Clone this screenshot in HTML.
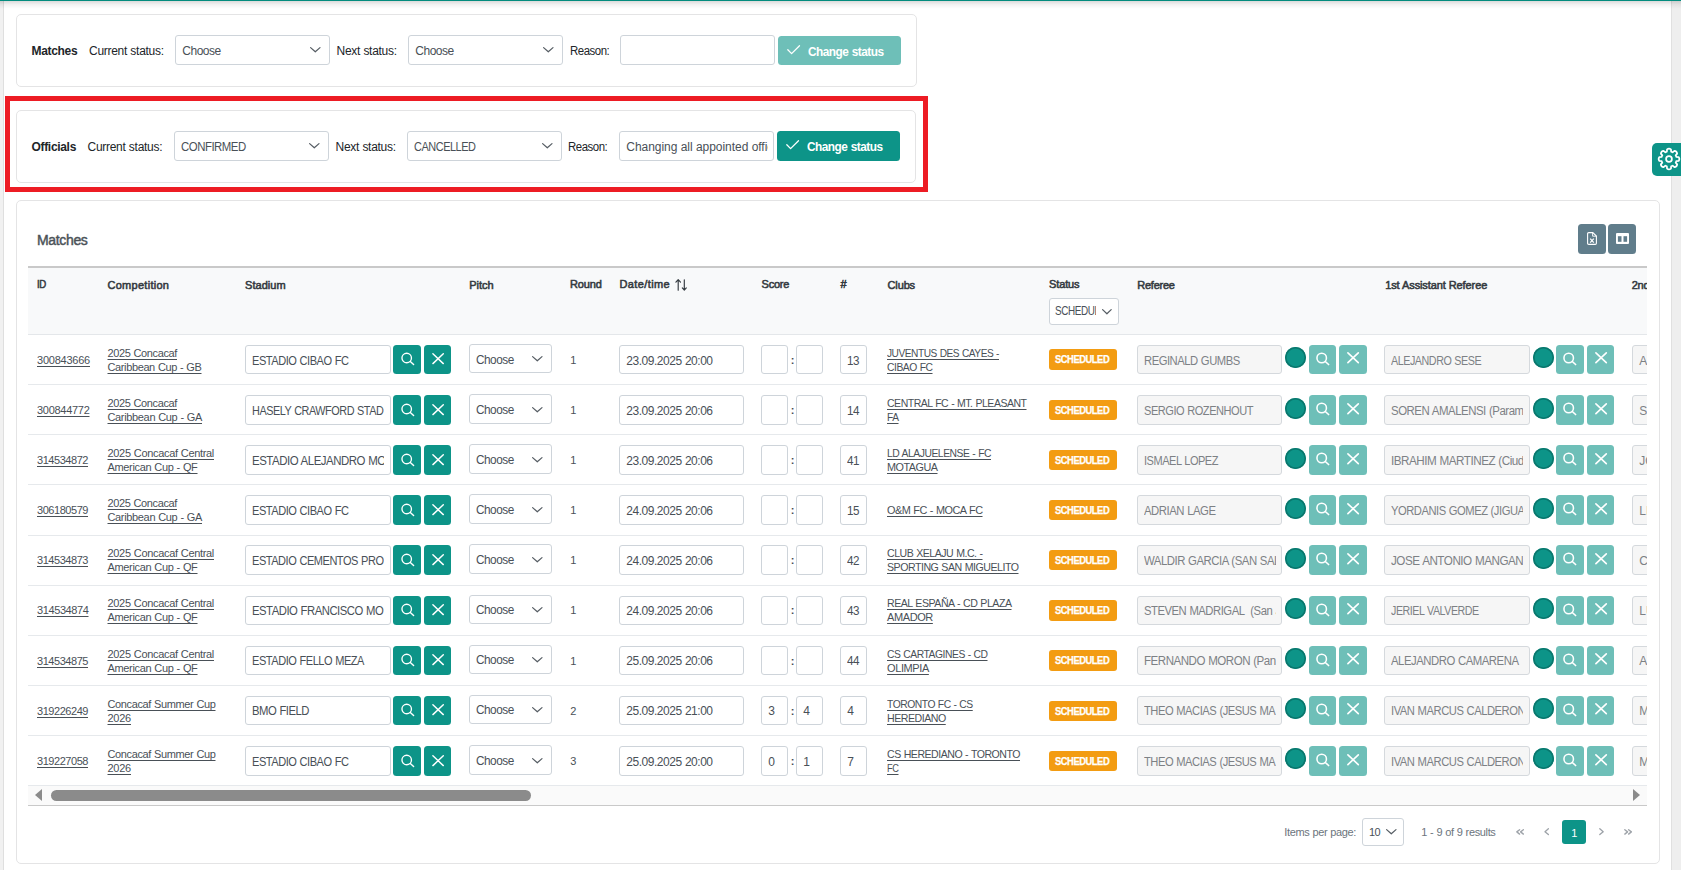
<!DOCTYPE html>
<html lang="en"><head><meta charset="utf-8"><title>Matches</title>
<style>
html,body{margin:0;padding:0;overflow:hidden}
body{width:1681px;height:870px;overflow:hidden;background:#fff;position:relative;font-family:"Liberation Sans",sans-serif;color:#495057;font-size:11px}
div,span,svg,a,b,label,h2{position:absolute;box-sizing:border-box;margin:0}
.t{white-space:pre;transform-origin:0 50%}
.a{text-decoration:underline;text-decoration-thickness:1px;text-underline-offset:1.5px}
.i{overflow:visible}
.topbar{left:0;top:0;width:1681px;height:1.25px;background:#038c7e}
.topshadow{left:0;top:1px;width:1681px;height:8px;background:linear-gradient(rgba(0,0,0,.14),rgba(0,0,0,.05) 45%,rgba(0,0,0,0))}
.lstrip{left:0;top:1px;width:3.6px;height:869px;background:#f1f1f1;border-right:1px solid #dfdfdf}
.rstrip{left:1671px;top:1px;width:10px;height:869px;background:#eee;border-left:1px solid #e0e0e0}
.gear{background:#0d9488;border-radius:5px 0 0 5px}
.panel{border:1px solid #e4e4e5;border-radius:5px;background:#fff}
.sel,.inp{border:1px solid #ced4da;border-radius:3px;background:#fff}
.inp.dis{background:#f6f6f6;border-color:#d5d9dd}
.clip{overflow:hidden}
.btn{background:#0d9488;border-radius:3.5px}
.red{border:5px solid #ed1c24}
.tool{background:#607d8b;border-radius:3.5px}
.tbl{overflow:hidden}
.tb-top{background:#c9c9c9}
.thead{background:#f8f9fa;border-bottom:1px solid #e4e7ea}
.tr{border-bottom:1px solid #e6e9ec;box-sizing:content-box}
.badge{background:#f39c12;border-radius:3px}
.dot{background:#0d9488;box-shadow:inset 0 0 0 1.6px #0a776d;border-radius:50%}
.hscroll{background:#fafafa;border-bottom:1px solid #c9c9c9}
.thumb{left:22.5px;top:4px;width:480.5px;height:11px;border-radius:5.5px;background:#8b8b8b}
.arrl{left:7px;top:3px;width:0;height:0;border-top:6.5px solid transparent;border-bottom:6.5px solid transparent;border-right:7px solid #8b8b8b}
.arrr{left:1605px;top:3px;width:0;height:0;border-top:6.5px solid transparent;border-bottom:6.5px solid transparent;border-left:7px solid #8b8b8b}
.page{background:#0d9488;border-radius:3px}
</style></head>
<body>
<div class="lstrip"></div><div class="rstrip"></div><div class="topshadow"></div><div class="topbar"></div>
<div class="gear" style="left:1652px;top:143px;width:29px;height:33px;">
<svg class="i" style="left:4.6px;top:4px" width="24" height="24" viewBox="0 0 24 24"><path d="M9.83 4.72L10.05 2.40A3.2 3.2 0 0 1 13.95 2.40L14.17 4.72A7.6 7.6 0 0 1 15.61 5.31L15.61 5.31L17.41 3.83A3.2 3.2 0 0 1 20.17 6.59L18.69 8.39A7.6 7.6 0 0 1 19.28 9.83L19.28 9.83L21.60 10.05A3.2 3.2 0 0 1 21.60 13.95L19.28 14.17A7.6 7.6 0 0 1 18.69 15.61L18.69 15.61L20.17 17.41A3.2 3.2 0 0 1 17.41 20.17L15.61 18.69A7.6 7.6 0 0 1 14.17 19.28L14.17 19.28L13.95 21.60A3.2 3.2 0 0 1 10.05 21.60L9.83 19.28A7.6 7.6 0 0 1 8.39 18.69L8.39 18.69L6.59 20.17A3.2 3.2 0 0 1 3.83 17.41L5.31 15.61A7.6 7.6 0 0 1 4.72 14.17L4.72 14.17L2.40 13.95A3.2 3.2 0 0 1 2.40 10.05L4.72 9.83A7.6 7.6 0 0 1 5.31 8.39L5.31 8.39L3.83 6.59A3.2 3.2 0 0 1 6.59 3.83L8.39 5.31A7.6 7.6 0 0 1 9.83 4.72Z" fill="none" stroke="#fff" stroke-width="1.75" stroke-linejoin="round"/><circle cx="12" cy="12" r="2.9" fill="none" stroke="#fff" stroke-width="1.75"/></svg>
</div>
<div class="panel" style="left:16px;top:14px;width:901px;height:73px;">
<span class="t" style="left:14.5px;top:28.5px;font-size:12px;line-height:15px;font-weight:700;color:#212529;letter-spacing:-0.326px;">Matches</span>
<span class="t" style="left:72px;top:28.5px;font-size:12px;line-height:15px;color:#212529;letter-spacing:-0.282px;word-spacing:0.282px;">Current status:</span>
<div class="sel" style="left:158px;top:20px;width:155px;height:30px;">
<span class="t" style="left:6.3px;top:7.5px;font-size:12px;line-height:15px;letter-spacing:-0.479px;">Choose</span>
<svg class="i" style="left:134.2px;top:10.85px" width="10.6" height="5.6" viewBox="0 0 10.6 5.6"><path d="M0.6 0.6L5.3 4.8L10 0.6" stroke="#555c63" stroke-width="1.2" stroke-linecap="round" stroke-linejoin="round" fill="none"/></svg>
</div>
<span class="t" style="left:319.5px;top:28.5px;font-size:12px;line-height:15px;color:#212529;letter-spacing:-0.283px;word-spacing:0.283px;">Next status:</span>
<div class="sel" style="left:391px;top:20px;width:155px;height:30px;">
<span class="t" style="left:6.3px;top:7.5px;font-size:12px;line-height:15px;letter-spacing:-0.479px;">Choose</span>
<svg class="i" style="left:134.2px;top:10.85px" width="10.6" height="5.6" viewBox="0 0 10.6 5.6"><path d="M0.6 0.6L5.3 4.8L10 0.6" stroke="#555c63" stroke-width="1.2" stroke-linecap="round" stroke-linejoin="round" fill="none"/></svg>
</div>
<span class="t" style="left:552.5px;top:28.5px;font-size:12px;line-height:15px;color:#212529;letter-spacing:-0.500px;transform:scaleX(0.9526);">Reason:</span>
<div class="inp" style="left:603px;top:20px;width:155px;height:30px;">
</div>
<div class="btn" style="left:761px;top:21px;width:123px;height:29px;background:#6ebfb8;">
<svg class="i" style="left:9.4px;top:9.4px" width="13.4" height="9.6" viewBox="0 0 13.4 9.6"><path d="M0.8 4.8L4.6 8.6L12.5 0.8" stroke="#fff" stroke-width="1.3" stroke-linecap="round" stroke-linejoin="round" fill="none"/></svg>
<span class="t" style="left:29.5px;top:8.5px;font-size:12px;line-height:15px;font-weight:700;color:#fff;letter-spacing:-0.500px;word-spacing:0.500px;transform:scaleX(0.9845);">Change status</span>
</div>
</div>
<div class="panel" style="left:16px;top:110px;width:900px;height:73px;">
<span class="t" style="left:14.5px;top:28.5px;font-size:12px;line-height:15px;font-weight:700;color:#212529;letter-spacing:-0.318px;">Officials</span>
<span class="t" style="left:70.5px;top:28.5px;font-size:12px;line-height:15px;color:#212529;letter-spacing:-0.282px;word-spacing:0.282px;">Current status:</span>
<div class="sel" style="left:157px;top:20px;width:155px;height:30px;">
<span class="t" style="left:6.3px;top:7.5px;font-size:12px;line-height:15px;letter-spacing:-0.500px;transform:scaleX(0.9498);">CONFIRMED</span>
<svg class="i" style="left:134.2px;top:10.85px" width="10.6" height="5.6" viewBox="0 0 10.6 5.6"><path d="M0.6 0.6L5.3 4.8L10 0.6" stroke="#555c63" stroke-width="1.2" stroke-linecap="round" stroke-linejoin="round" fill="none"/></svg>
</div>
<span class="t" style="left:318.5px;top:28.5px;font-size:12px;line-height:15px;color:#212529;letter-spacing:-0.283px;word-spacing:0.283px;">Next status:</span>
<div class="sel" style="left:390px;top:20px;width:155px;height:30px;">
<span class="t" style="left:6.3px;top:7.5px;font-size:12px;line-height:15px;letter-spacing:-0.500px;transform:scaleX(0.9107);">CANCELLED</span>
<svg class="i" style="left:134.2px;top:10.85px" width="10.6" height="5.6" viewBox="0 0 10.6 5.6"><path d="M0.6 0.6L5.3 4.8L10 0.6" stroke="#555c63" stroke-width="1.2" stroke-linecap="round" stroke-linejoin="round" fill="none"/></svg>
</div>
<span class="t" style="left:551px;top:28.5px;font-size:12px;line-height:15px;color:#212529;letter-spacing:-0.500px;transform:scaleX(0.9526);">Reason:</span>
<div class="inp" style="left:602px;top:20px;width:155px;height:30px;">
<div class="clip" style="left:0px;top:0px;width:147.7px;height:28px;">
<span class="t" style="left:6.3px;top:7.5px;font-size:12px;line-height:15px;letter-spacing:-0.037px;word-spacing:0.037px;">Changing all appointed offic</span>
</div>
</div>
<div class="btn" style="left:760px;top:20px;width:123px;height:30px;">
<svg class="i" style="left:9.2px;top:9.1px" width="13.4" height="9.6" viewBox="0 0 13.4 9.6"><path d="M0.8 4.8L4.6 8.6L12.5 0.8" stroke="#fff" stroke-width="1.3" stroke-linecap="round" stroke-linejoin="round" fill="none"/></svg>
<span class="t" style="left:29.5px;top:8.5px;font-size:12px;line-height:15px;font-weight:700;color:#fff;letter-spacing:-0.500px;word-spacing:0.500px;transform:scaleX(0.9845);">Change status</span>
</div>
</div>
<div class="red" style="left:5px;top:96px;width:923.3px;height:96px;">
</div>
<div class="panel" style="left:16px;top:200px;width:1644px;height:664px;">
<span class="t h2" style="left:20px;top:30px;font-size:14px;line-height:18px;color:#4b5258;letter-spacing:-0.346px;-webkit-text-stroke:0.45px;">Matches</span>
<div class="tool" style="left:1561px;top:23px;width:28px;height:30px;">
<svg class="i" style="left:9.3px;top:7.6px" width="10" height="13" viewBox="0 0 10 13"><path d="M1.7 0.6H5.8L9.4 4V11.2Q9.4 12.4 8.2 12.4H1.8Q0.6 12.4 0.6 11.2V1.7Q0.6 0.6 1.7 0.6Z" fill="none" stroke="#fff" stroke-width="1.1"/><path d="M5.6 0.8V4.2H9.2" fill="none" stroke="#fff" stroke-width="0.9"/><path d="M3.2 6.6L6.8 10.6M6.8 6.6L3.2 10.6" stroke="#fff" stroke-width="1.25" fill="none"/></svg>
</div>
<div class="tool" style="left:1591px;top:23px;width:28px;height:30px;">
<svg class="i" style="left:7.6px;top:9.4px" width="13" height="11" viewBox="0 0 13 11"><rect x="0" y="0" width="13" height="11" rx="1" fill="#fff"/><rect x="1.9" y="3.2" width="3.6" height="5.6" fill="#607d8b"/><rect x="7.5" y="3.2" width="3.6" height="5.6" fill="#607d8b"/></svg>
</div>
<div class="tbl" style="left:11px;top:65px;width:1619px;height:541px;">
<div class="tb-top" style="left:0px;top:0px;width:1619px;height:2px;">
</div>
<div class="thead" style="left:0px;top:2px;width:1619px;height:67px;">
<span class="t th" style="left:9px;top:9px;font-size:11px;line-height:14px;color:#343a40;letter-spacing:-0.500px;transform:scaleX(0.8750);-webkit-text-stroke:0.55px;">ID</span>
<span class="t th" style="left:79.5px;top:10px;font-size:11px;line-height:14px;color:#343a40;letter-spacing:0.277px;-webkit-text-stroke:0.55px;">Competition</span>
<span class="t th" style="left:217px;top:10px;font-size:11px;line-height:14px;color:#343a40;letter-spacing:0.056px;-webkit-text-stroke:0.55px;">Stadium</span>
<span class="t th" style="left:441.25px;top:10px;font-size:11px;line-height:14px;color:#343a40;letter-spacing:0.006px;-webkit-text-stroke:0.55px;">Pitch</span>
<span class="t th" style="left:542px;top:9px;font-size:11px;line-height:14px;color:#343a40;letter-spacing:-0.134px;-webkit-text-stroke:0.55px;">Round</span>
<span class="t th" style="left:591.5px;top:9px;font-size:11px;line-height:14px;color:#343a40;letter-spacing:0.380px;-webkit-text-stroke:0.55px;">Date/time</span>
<svg class="i" style="left:647.3px;top:10.4px" width="13" height="13" viewBox="0 0 13 13"><path d="M3.2 12.2V1.8M0.9 4.1L3.2 1.7L5.5 4.1M9.3 1.7V12.1M7.3 9.9L9.3 12.2L11.3 9.9" stroke="#343a40" stroke-width="1.15" stroke-linecap="round" stroke-linejoin="round" fill="none"/></svg>
<span class="t th" style="left:733.5px;top:9px;font-size:11px;line-height:14px;color:#343a40;letter-spacing:-0.200px;-webkit-text-stroke:0.55px;">Score</span>
<span class="t th" style="left:812.5px;top:9px;font-size:11px;line-height:14px;color:#343a40;letter-spacing:0.375px;-webkit-text-stroke:0.55px;">#</span>
<span class="t th" style="left:859.5px;top:10px;font-size:11px;line-height:14px;color:#343a40;letter-spacing:-0.125px;-webkit-text-stroke:0.55px;">Clubs</span>
<span class="t th" style="left:1021px;top:9px;font-size:11px;line-height:14px;color:#343a40;letter-spacing:-0.115px;-webkit-text-stroke:0.55px;">Status</span>
<div class="sel" style="left:1021px;top:29.8px;width:69.6px;height:27.2px;">
<div class="clip" style="left:0px;top:0px;width:46.2px;height:25.2px;">
<span class="t" style="left:5.2px;top:5.7px;font-size:12px;line-height:15px;letter-spacing:-0.500px;transform:scaleX(0.8265);">SCHEDUL</span>
</div>
<svg class="i" style="left:51.7px;top:10.55px" width="9.8" height="5.6" viewBox="0 0 9.8 5.6"><path d="M0.6 0.6L4.9 4.8L9.2 0.6" stroke="#555c63" stroke-width="1.2" stroke-linecap="round" stroke-linejoin="round" fill="none"/></svg>
</div>
<span class="t th" style="left:1109.25px;top:10px;font-size:11px;line-height:14px;color:#343a40;letter-spacing:-0.234px;-webkit-text-stroke:0.55px;">Referee</span>
<span class="t th" style="left:1357.2px;top:10px;font-size:11px;line-height:14px;color:#343a40;letter-spacing:-0.103px;word-spacing:0.103px;-webkit-text-stroke:0.55px;">1st Assistant Referee</span>
<span class="t th" style="left:1603.7px;top:10px;font-size:11px;line-height:14px;color:#343a40;letter-spacing:-0.191px;word-spacing:0.191px;-webkit-text-stroke:0.55px;">2nd Assistant Referee</span>
</div>
<div class="tr" style="left:0px;top:69px;width:1619px;height:49px;">
<a class="t a" style="left:9px;top:18px;font-size:11px;line-height:14px;letter-spacing:-0.229px;">300843666</a>
<a class="t a" style="left:79.5px;top:11px;font-size:11px;line-height:14px;letter-spacing:-0.375px;word-spacing:0.375px;">2025 Concacaf</a>
<a class="t a" style="left:79.5px;top:25px;font-size:11px;line-height:14px;letter-spacing:-0.378px;word-spacing:0.378px;">Caribbean Cup - GB</a>
<div class="inp" style="left:217px;top:10px;width:146px;height:29px;">
<div class="clip" style="left:0px;top:0px;width:138.4px;height:27px;">
<span class="t" style="left:6.3px;top:7.5px;font-size:12px;line-height:15px;letter-spacing:-0.500px;word-spacing:0.500px;transform:scaleX(0.9208);">ESTADIO CIBAO FC</span>
</div>
</div>
<div class="btn" style="left:365px;top:10px;width:28px;height:29px;">
<svg class="i" style="left:7.9px;top:7.1px" width="14" height="14" viewBox="0 0 14 14"><circle cx="5.7" cy="6" r="4.75" fill="none" stroke="#fff" stroke-width="1.35"/><path d="M9.3 9.5L12.6 12.5" stroke="#fff" stroke-width="1.45" stroke-linecap="round"/></svg>
</div>
<div class="btn" style="left:396px;top:10px;width:27.2px;height:29px;">
<svg class="i" style="left:7.5px;top:8.2px" width="13" height="12" viewBox="0 0 13 12"><path d="M0.9 0.8L11.3 10.6M11.3 0.8L0.9 10.6" stroke="#fff" stroke-width="1.45" stroke-linecap="round" fill="none"/></svg>
</div>
<div class="sel" style="left:441px;top:9px;width:83px;height:29px;">
<span class="t" style="left:6.3px;top:7.5px;font-size:12px;line-height:15px;letter-spacing:-0.500px;transform:scaleX(0.9837);">Choose</span>
<svg class="i" style="left:62.4px;top:11.45px" width="10.6" height="5.6" viewBox="0 0 10.6 5.6"><path d="M0.6 0.6L5.3 4.8L10 0.6" stroke="#555c63" stroke-width="1.2" stroke-linecap="round" stroke-linejoin="round" fill="none"/></svg>
</div>
<span class="t" style="left:542.3px;top:18px;font-size:11px;line-height:14px;">1</span>
<div class="inp" style="left:591px;top:10px;width:125.2px;height:29px;">
<div class="clip" style="left:0px;top:0px;width:117.5px;height:27px;">
<span class="t" style="left:6.3px;top:7.5px;font-size:12px;line-height:15px;letter-spacing:-0.478px;word-spacing:0.478px;">23.09.2025 20:00</span>
</div>
</div>
<div class="inp" style="left:733px;top:10px;width:27px;height:29px;">
</div>
<span class="t" style="left:762.7px;top:18px;font-size:11px;line-height:14px;font-weight:700;">:</span>
<div class="inp" style="left:768px;top:10px;width:27px;height:29px;">
</div>
<div class="inp" style="left:812px;top:10px;width:27px;height:29px;">
<div class="clip" style="left:0px;top:0px;width:20px;height:27px;">
<span class="t" style="left:6.3px;top:7.5px;font-size:12px;line-height:15px;letter-spacing:-0.500px;transform:scaleX(0.9709);">13</span>
</div>
</div>
<a class="t a" style="left:859.1px;top:11px;font-size:11px;line-height:14px;letter-spacing:-0.500px;word-spacing:0.500px;transform:scaleX(0.9218);">JUVENTUS DES CAYES -</a>
<a class="t a" style="left:859.1px;top:25px;font-size:11px;line-height:14px;letter-spacing:-0.500px;word-spacing:0.500px;transform:scaleX(0.9391);">CIBAO FC</a>
<div class="badge" style="left:1021px;top:14px;width:68px;height:21px;">
<span class="t" style="left:6.4px;top:4px;font-size:10px;line-height:13px;font-weight:700;color:#fff;letter-spacing:-0.500px;transform:scaleX(0.9388);-webkit-text-stroke:0.25px;">SCHEDULED</span>
</div>
<div class="inp dis" style="left:1109px;top:10px;width:145.3px;height:29px;">
<div class="clip" style="left:0px;top:0px;width:137.6px;height:27px;">
<span class="t" style="left:6.3px;top:7.5px;font-size:12px;line-height:15px;color:#7d8185;letter-spacing:-0.500px;word-spacing:0.500px;transform:scaleX(0.9370);">REGINALD GUMBS</span>
</div>
</div>
<div class="dot" style="left:1257.2px;top:12px;width:21px;height:21px;">
</div>
<div class="btn" style="left:1281px;top:10px;width:27.2px;height:29px;background:#6ebfb8;">
<svg class="i" style="left:6.8px;top:6.5px" width="14" height="14" viewBox="0 0 14 14"><circle cx="5.7" cy="6" r="4.75" fill="none" stroke="#fff" stroke-width="1.5525"/><path d="M9.3 9.5L12.6 12.5" stroke="#fff" stroke-width="1.6675" stroke-linecap="round"/></svg>
</div>
<div class="btn" style="left:1311.2px;top:10px;width:27.8px;height:29px;background:#6ebfb8;">
<svg class="i" style="left:8.2px;top:7.2px" width="13" height="12" viewBox="0 0 13 12"><path d="M0.9 0.8L11.3 10.6M11.3 0.8L0.9 10.6" stroke="#fff" stroke-width="1.624" stroke-linecap="round" fill="none"/></svg>
</div>
<div class="inp dis" style="left:1356px;top:10px;width:146px;height:29px;">
<div class="clip" style="left:0px;top:0px;width:138.3px;height:27px;">
<span class="t" style="left:6.3px;top:7.5px;font-size:12px;line-height:15px;color:#7d8185;letter-spacing:-0.500px;word-spacing:0.500px;transform:scaleX(0.8942);">ALEJANDRO SESE</span>
</div>
</div>
<div class="dot" style="left:1504.8px;top:12px;width:21px;height:21px;">
</div>
<div class="btn" style="left:1528px;top:10px;width:28px;height:29px;background:#6ebfb8;">
<svg class="i" style="left:7.1px;top:6.5px" width="14" height="14" viewBox="0 0 14 14"><circle cx="5.7" cy="6" r="4.75" fill="none" stroke="#fff" stroke-width="1.5525"/><path d="M9.3 9.5L12.6 12.5" stroke="#fff" stroke-width="1.6675" stroke-linecap="round"/></svg>
</div>
<div class="btn" style="left:1559px;top:10px;width:27.2px;height:29px;background:#6ebfb8;">
<svg class="i" style="left:7.7px;top:7.2px" width="13" height="12" viewBox="0 0 13 12"><path d="M0.9 0.8L11.3 10.6M11.3 0.8L0.9 10.6" stroke="#fff" stroke-width="1.624" stroke-linecap="round" fill="none"/></svg>
</div>
<div class="inp dis" style="left:1604px;top:10px;width:146px;height:29px;">
<div class="clip" style="left:0px;top:0px;width:138.3px;height:27px;">
<span class="t" style="left:6.3px;top:7.5px;font-size:12px;line-height:15px;color:#7d8185;">AN</span>
</div>
</div>
</div>
<div class="tr" style="left:0px;top:119px;width:1619px;height:49px;">
<a class="t a" style="left:9px;top:18px;font-size:11px;line-height:14px;letter-spacing:-0.285px;">300844772</a>
<a class="t a" style="left:79.5px;top:11px;font-size:11px;line-height:14px;letter-spacing:-0.375px;word-spacing:0.375px;">2025 Concacaf</a>
<a class="t a" style="left:79.5px;top:25px;font-size:11px;line-height:14px;letter-spacing:-0.345px;word-spacing:0.345px;">Caribbean Cup - GA</a>
<div class="inp" style="left:217px;top:10px;width:146px;height:30px;">
<div class="clip" style="left:0px;top:0px;width:138.4px;height:28px;">
<span class="t" style="left:6.3px;top:7.5px;font-size:12px;line-height:15px;letter-spacing:-0.500px;word-spacing:0.500px;transform:scaleX(0.9046);">HASELY CRAWFORD STAD</span>
</div>
</div>
<div class="btn" style="left:365px;top:10px;width:28px;height:30px;">
<svg class="i" style="left:7.9px;top:7.6px" width="14" height="14" viewBox="0 0 14 14"><circle cx="5.7" cy="6" r="4.75" fill="none" stroke="#fff" stroke-width="1.35"/><path d="M9.3 9.5L12.6 12.5" stroke="#fff" stroke-width="1.45" stroke-linecap="round"/></svg>
</div>
<div class="btn" style="left:396px;top:10px;width:27.2px;height:30px;">
<svg class="i" style="left:7.5px;top:8.7px" width="13" height="12" viewBox="0 0 13 12"><path d="M0.9 0.8L11.3 10.6M11.3 0.8L0.9 10.6" stroke="#fff" stroke-width="1.45" stroke-linecap="round" fill="none"/></svg>
</div>
<div class="sel" style="left:441px;top:9px;width:83px;height:30px;">
<span class="t" style="left:6.3px;top:7.5px;font-size:12px;line-height:15px;letter-spacing:-0.500px;transform:scaleX(0.9837);">Choose</span>
<svg class="i" style="left:62.4px;top:11.95px" width="10.6" height="5.6" viewBox="0 0 10.6 5.6"><path d="M0.6 0.6L5.3 4.8L10 0.6" stroke="#555c63" stroke-width="1.2" stroke-linecap="round" stroke-linejoin="round" fill="none"/></svg>
</div>
<span class="t" style="left:542.3px;top:18px;font-size:11px;line-height:14px;">1</span>
<div class="inp" style="left:591px;top:10px;width:125.2px;height:30px;">
<div class="clip" style="left:0px;top:0px;width:117.5px;height:28px;">
<span class="t" style="left:6.3px;top:7.5px;font-size:12px;line-height:15px;letter-spacing:-0.478px;word-spacing:0.478px;">23.09.2025 20:06</span>
</div>
</div>
<div class="inp" style="left:733px;top:10px;width:27px;height:30px;">
</div>
<span class="t" style="left:762.7px;top:18px;font-size:11px;line-height:14px;font-weight:700;">:</span>
<div class="inp" style="left:768px;top:10px;width:27px;height:30px;">
</div>
<div class="inp" style="left:812px;top:10px;width:27px;height:30px;">
<div class="clip" style="left:0px;top:0px;width:20px;height:28px;">
<span class="t" style="left:6.3px;top:7.5px;font-size:12px;line-height:15px;letter-spacing:-0.500px;transform:scaleX(0.9709);">14</span>
</div>
</div>
<a class="t a" style="left:859.1px;top:11px;font-size:11px;line-height:14px;letter-spacing:-0.500px;word-spacing:0.500px;transform:scaleX(0.9544);">CENTRAL FC - MT. PLEASANT</a>
<a class="t a" style="left:859.1px;top:25px;font-size:11px;line-height:14px;letter-spacing:-0.500px;transform:scaleX(0.9235);">FA</a>
<div class="badge" style="left:1021px;top:15px;width:68px;height:20px;">
<span class="t" style="left:6.4px;top:4px;font-size:10px;line-height:13px;font-weight:700;color:#fff;letter-spacing:-0.500px;transform:scaleX(0.9388);-webkit-text-stroke:0.25px;">SCHEDULED</span>
</div>
<div class="inp dis" style="left:1109px;top:10px;width:145.3px;height:30px;">
<div class="clip" style="left:0px;top:0px;width:137.6px;height:28px;">
<span class="t" style="left:6.3px;top:7.5px;font-size:12px;line-height:15px;color:#7d8185;letter-spacing:-0.500px;word-spacing:0.500px;transform:scaleX(0.9197);">SERGIO ROZENHOUT</span>
</div>
</div>
<div class="dot" style="left:1257.2px;top:13px;width:21px;height:21px;">
</div>
<div class="btn" style="left:1281px;top:10px;width:27.2px;height:30px;background:#6ebfb8;">
<svg class="i" style="left:6.8px;top:7px" width="14" height="14" viewBox="0 0 14 14"><circle cx="5.7" cy="6" r="4.75" fill="none" stroke="#fff" stroke-width="1.5525"/><path d="M9.3 9.5L12.6 12.5" stroke="#fff" stroke-width="1.6675" stroke-linecap="round"/></svg>
</div>
<div class="btn" style="left:1311.2px;top:10px;width:27.8px;height:30px;background:#6ebfb8;">
<svg class="i" style="left:8.2px;top:7.7px" width="13" height="12" viewBox="0 0 13 12"><path d="M0.9 0.8L11.3 10.6M11.3 0.8L0.9 10.6" stroke="#fff" stroke-width="1.624" stroke-linecap="round" fill="none"/></svg>
</div>
<div class="inp dis" style="left:1356px;top:10px;width:146px;height:30px;">
<div class="clip" style="left:0px;top:0px;width:138.3px;height:28px;">
<span class="t" style="left:6.3px;top:7.5px;font-size:12px;line-height:15px;color:#7d8185;letter-spacing:-0.500px;word-spacing:0.500px;transform:scaleX(0.9525);">SOREN AMALENSI (Param</span>
</div>
</div>
<div class="dot" style="left:1504.8px;top:13px;width:21px;height:21px;">
</div>
<div class="btn" style="left:1528px;top:10px;width:28px;height:30px;background:#6ebfb8;">
<svg class="i" style="left:7.1px;top:7px" width="14" height="14" viewBox="0 0 14 14"><circle cx="5.7" cy="6" r="4.75" fill="none" stroke="#fff" stroke-width="1.5525"/><path d="M9.3 9.5L12.6 12.5" stroke="#fff" stroke-width="1.6675" stroke-linecap="round"/></svg>
</div>
<div class="btn" style="left:1559px;top:10px;width:27.2px;height:30px;background:#6ebfb8;">
<svg class="i" style="left:7.7px;top:7.7px" width="13" height="12" viewBox="0 0 13 12"><path d="M0.9 0.8L11.3 10.6M11.3 0.8L0.9 10.6" stroke="#fff" stroke-width="1.624" stroke-linecap="round" fill="none"/></svg>
</div>
<div class="inp dis" style="left:1604px;top:10px;width:146px;height:30px;">
<div class="clip" style="left:0px;top:0px;width:138.3px;height:28px;">
<span class="t" style="left:6.3px;top:7.5px;font-size:12px;line-height:15px;color:#7d8185;">SA</span>
</div>
</div>
</div>
<div class="tr" style="left:0px;top:169px;width:1619px;height:49px;">
<a class="t a" style="left:9px;top:18px;font-size:11px;line-height:14px;letter-spacing:-0.451px;">314534872</a>
<a class="t a" style="left:79.5px;top:11px;font-size:11px;line-height:14px;letter-spacing:-0.317px;word-spacing:0.317px;">2025 Concacaf Central</a>
<a class="t a" style="left:79.5px;top:25px;font-size:11px;line-height:14px;letter-spacing:-0.339px;word-spacing:0.339px;">American Cup - QF</a>
<div class="inp" style="left:217px;top:10px;width:146px;height:30px;">
<div class="clip" style="left:0px;top:0px;width:138.4px;height:28px;">
<span class="t" style="left:6.3px;top:7.5px;font-size:12px;line-height:15px;letter-spacing:-0.500px;word-spacing:0.500px;transform:scaleX(0.9542);">ESTADIO ALEJANDRO MO</span>
</div>
</div>
<div class="btn" style="left:365px;top:10px;width:28px;height:30px;">
<svg class="i" style="left:7.9px;top:7.6px" width="14" height="14" viewBox="0 0 14 14"><circle cx="5.7" cy="6" r="4.75" fill="none" stroke="#fff" stroke-width="1.35"/><path d="M9.3 9.5L12.6 12.5" stroke="#fff" stroke-width="1.45" stroke-linecap="round"/></svg>
</div>
<div class="btn" style="left:396px;top:10px;width:27.2px;height:30px;">
<svg class="i" style="left:7.5px;top:8.7px" width="13" height="12" viewBox="0 0 13 12"><path d="M0.9 0.8L11.3 10.6M11.3 0.8L0.9 10.6" stroke="#fff" stroke-width="1.45" stroke-linecap="round" fill="none"/></svg>
</div>
<div class="sel" style="left:441px;top:9px;width:83px;height:30px;">
<span class="t" style="left:6.3px;top:7.5px;font-size:12px;line-height:15px;letter-spacing:-0.500px;transform:scaleX(0.9837);">Choose</span>
<svg class="i" style="left:62.4px;top:11.95px" width="10.6" height="5.6" viewBox="0 0 10.6 5.6"><path d="M0.6 0.6L5.3 4.8L10 0.6" stroke="#555c63" stroke-width="1.2" stroke-linecap="round" stroke-linejoin="round" fill="none"/></svg>
</div>
<span class="t" style="left:542.3px;top:18px;font-size:11px;line-height:14px;">1</span>
<div class="inp" style="left:591px;top:10px;width:125.2px;height:30px;">
<div class="clip" style="left:0px;top:0px;width:117.5px;height:28px;">
<span class="t" style="left:6.3px;top:7.5px;font-size:12px;line-height:15px;letter-spacing:-0.478px;word-spacing:0.478px;">23.09.2025 20:06</span>
</div>
</div>
<div class="inp" style="left:733px;top:10px;width:27px;height:30px;">
</div>
<span class="t" style="left:762.7px;top:18px;font-size:11px;line-height:14px;font-weight:700;">:</span>
<div class="inp" style="left:768px;top:10px;width:27px;height:30px;">
</div>
<div class="inp" style="left:812px;top:10px;width:27px;height:30px;">
<div class="clip" style="left:0px;top:0px;width:20px;height:28px;">
<span class="t" style="left:6.3px;top:7.5px;font-size:12px;line-height:15px;letter-spacing:-0.500px;transform:scaleX(0.9709);">41</span>
</div>
</div>
<a class="t a" style="left:859.1px;top:11px;font-size:11px;line-height:14px;letter-spacing:-0.500px;word-spacing:0.500px;transform:scaleX(0.9404);">LD ALAJUELENSE - FC</a>
<a class="t a" style="left:859.1px;top:25px;font-size:11px;line-height:14px;letter-spacing:-0.500px;transform:scaleX(0.9845);">MOTAGUA</a>
<div class="badge" style="left:1021px;top:15px;width:68px;height:20px;">
<span class="t" style="left:6.4px;top:4px;font-size:10px;line-height:13px;font-weight:700;color:#fff;letter-spacing:-0.500px;transform:scaleX(0.9388);-webkit-text-stroke:0.25px;">SCHEDULED</span>
</div>
<div class="inp dis" style="left:1109px;top:10px;width:145.3px;height:30px;">
<div class="clip" style="left:0px;top:0px;width:137.6px;height:28px;">
<span class="t" style="left:6.3px;top:7.5px;font-size:12px;line-height:15px;color:#7d8185;letter-spacing:-0.500px;word-spacing:0.500px;transform:scaleX(0.9164);">ISMAEL LOPEZ</span>
</div>
</div>
<div class="dot" style="left:1257.2px;top:13px;width:21px;height:21px;">
</div>
<div class="btn" style="left:1281px;top:10px;width:27.2px;height:30px;background:#6ebfb8;">
<svg class="i" style="left:6.8px;top:7px" width="14" height="14" viewBox="0 0 14 14"><circle cx="5.7" cy="6" r="4.75" fill="none" stroke="#fff" stroke-width="1.5525"/><path d="M9.3 9.5L12.6 12.5" stroke="#fff" stroke-width="1.6675" stroke-linecap="round"/></svg>
</div>
<div class="btn" style="left:1311.2px;top:10px;width:27.8px;height:30px;background:#6ebfb8;">
<svg class="i" style="left:8.2px;top:7.7px" width="13" height="12" viewBox="0 0 13 12"><path d="M0.9 0.8L11.3 10.6M11.3 0.8L0.9 10.6" stroke="#fff" stroke-width="1.624" stroke-linecap="round" fill="none"/></svg>
</div>
<div class="inp dis" style="left:1356px;top:10px;width:146px;height:30px;">
<div class="clip" style="left:0px;top:0px;width:138.3px;height:28px;">
<span class="t" style="left:6.3px;top:7.5px;font-size:12px;line-height:15px;color:#7d8185;letter-spacing:-0.500px;word-spacing:0.500px;transform:scaleX(0.9732);">IBRAHIM MARTINEZ (Ciud</span>
</div>
</div>
<div class="dot" style="left:1504.8px;top:13px;width:21px;height:21px;">
</div>
<div class="btn" style="left:1528px;top:10px;width:28px;height:30px;background:#6ebfb8;">
<svg class="i" style="left:7.1px;top:7px" width="14" height="14" viewBox="0 0 14 14"><circle cx="5.7" cy="6" r="4.75" fill="none" stroke="#fff" stroke-width="1.5525"/><path d="M9.3 9.5L12.6 12.5" stroke="#fff" stroke-width="1.6675" stroke-linecap="round"/></svg>
</div>
<div class="btn" style="left:1559px;top:10px;width:27.2px;height:30px;background:#6ebfb8;">
<svg class="i" style="left:7.7px;top:7.7px" width="13" height="12" viewBox="0 0 13 12"><path d="M0.9 0.8L11.3 10.6M11.3 0.8L0.9 10.6" stroke="#fff" stroke-width="1.624" stroke-linecap="round" fill="none"/></svg>
</div>
<div class="inp dis" style="left:1604px;top:10px;width:146px;height:30px;">
<div class="clip" style="left:0px;top:0px;width:138.3px;height:28px;">
<span class="t" style="left:6.3px;top:7.5px;font-size:12px;line-height:15px;color:#7d8185;">JO</span>
</div>
</div>
</div>
<div class="tr" style="left:0px;top:219px;width:1619px;height:50px;">
<a class="t a" style="left:9px;top:18px;font-size:11px;line-height:14px;letter-spacing:-0.451px;">306180579</a>
<a class="t a" style="left:79.5px;top:11px;font-size:11px;line-height:14px;letter-spacing:-0.375px;word-spacing:0.375px;">2025 Concacaf</a>
<a class="t a" style="left:79.5px;top:25px;font-size:11px;line-height:14px;letter-spacing:-0.345px;word-spacing:0.345px;">Caribbean Cup - GA</a>
<div class="inp" style="left:217px;top:10px;width:146px;height:30px;">
<div class="clip" style="left:0px;top:0px;width:138.4px;height:28px;">
<span class="t" style="left:6.3px;top:7.5px;font-size:12px;line-height:15px;letter-spacing:-0.500px;word-spacing:0.500px;transform:scaleX(0.9208);">ESTADIO CIBAO FC</span>
</div>
</div>
<div class="btn" style="left:365px;top:10px;width:28px;height:30px;">
<svg class="i" style="left:7.9px;top:7.6px" width="14" height="14" viewBox="0 0 14 14"><circle cx="5.7" cy="6" r="4.75" fill="none" stroke="#fff" stroke-width="1.35"/><path d="M9.3 9.5L12.6 12.5" stroke="#fff" stroke-width="1.45" stroke-linecap="round"/></svg>
</div>
<div class="btn" style="left:396px;top:10px;width:27.2px;height:30px;">
<svg class="i" style="left:7.5px;top:8.7px" width="13" height="12" viewBox="0 0 13 12"><path d="M0.9 0.8L11.3 10.6M11.3 0.8L0.9 10.6" stroke="#fff" stroke-width="1.45" stroke-linecap="round" fill="none"/></svg>
</div>
<div class="sel" style="left:441px;top:9px;width:83px;height:30px;">
<span class="t" style="left:6.3px;top:7.5px;font-size:12px;line-height:15px;letter-spacing:-0.500px;transform:scaleX(0.9837);">Choose</span>
<svg class="i" style="left:62.4px;top:11.95px" width="10.6" height="5.6" viewBox="0 0 10.6 5.6"><path d="M0.6 0.6L5.3 4.8L10 0.6" stroke="#555c63" stroke-width="1.2" stroke-linecap="round" stroke-linejoin="round" fill="none"/></svg>
</div>
<span class="t" style="left:542.3px;top:18px;font-size:11px;line-height:14px;">1</span>
<div class="inp" style="left:591px;top:10px;width:125.2px;height:30px;">
<div class="clip" style="left:0px;top:0px;width:117.5px;height:28px;">
<span class="t" style="left:6.3px;top:7.5px;font-size:12px;line-height:15px;letter-spacing:-0.478px;word-spacing:0.478px;">24.09.2025 20:06</span>
</div>
</div>
<div class="inp" style="left:733px;top:10px;width:27px;height:30px;">
</div>
<span class="t" style="left:762.7px;top:18px;font-size:11px;line-height:14px;font-weight:700;">:</span>
<div class="inp" style="left:768px;top:10px;width:27px;height:30px;">
</div>
<div class="inp" style="left:812px;top:10px;width:27px;height:30px;">
<div class="clip" style="left:0px;top:0px;width:20px;height:28px;">
<span class="t" style="left:6.3px;top:7.5px;font-size:12px;line-height:15px;letter-spacing:-0.500px;transform:scaleX(0.9709);">15</span>
</div>
</div>
<a class="t a" style="left:859.1px;top:18px;font-size:11px;line-height:14px;letter-spacing:-0.500px;word-spacing:0.500px;transform:scaleX(0.9879);">O&amp;M FC - MOCA FC</a>
<div class="badge" style="left:1021px;top:15px;width:68px;height:20px;">
<span class="t" style="left:6.4px;top:4px;font-size:10px;line-height:13px;font-weight:700;color:#fff;letter-spacing:-0.500px;transform:scaleX(0.9388);-webkit-text-stroke:0.25px;">SCHEDULED</span>
</div>
<div class="inp dis" style="left:1109px;top:10px;width:145.3px;height:30px;">
<div class="clip" style="left:0px;top:0px;width:137.6px;height:28px;">
<span class="t" style="left:6.3px;top:7.5px;font-size:12px;line-height:15px;color:#7d8185;letter-spacing:-0.500px;word-spacing:0.500px;transform:scaleX(0.9445);">ADRIAN LAGE</span>
</div>
</div>
<div class="dot" style="left:1257.2px;top:13px;width:21px;height:21px;">
</div>
<div class="btn" style="left:1281px;top:10px;width:27.2px;height:30px;background:#6ebfb8;">
<svg class="i" style="left:6.8px;top:7px" width="14" height="14" viewBox="0 0 14 14"><circle cx="5.7" cy="6" r="4.75" fill="none" stroke="#fff" stroke-width="1.5525"/><path d="M9.3 9.5L12.6 12.5" stroke="#fff" stroke-width="1.6675" stroke-linecap="round"/></svg>
</div>
<div class="btn" style="left:1311.2px;top:10px;width:27.8px;height:30px;background:#6ebfb8;">
<svg class="i" style="left:8.2px;top:7.7px" width="13" height="12" viewBox="0 0 13 12"><path d="M0.9 0.8L11.3 10.6M11.3 0.8L0.9 10.6" stroke="#fff" stroke-width="1.624" stroke-linecap="round" fill="none"/></svg>
</div>
<div class="inp dis" style="left:1356px;top:10px;width:146px;height:30px;">
<div class="clip" style="left:0px;top:0px;width:138.3px;height:28px;">
<span class="t" style="left:6.3px;top:7.5px;font-size:12px;line-height:15px;color:#7d8185;letter-spacing:-0.500px;word-spacing:0.500px;transform:scaleX(0.9323);">YORDANIS GOMEZ (JIGUA</span>
</div>
</div>
<div class="dot" style="left:1504.8px;top:13px;width:21px;height:21px;">
</div>
<div class="btn" style="left:1528px;top:10px;width:28px;height:30px;background:#6ebfb8;">
<svg class="i" style="left:7.1px;top:7px" width="14" height="14" viewBox="0 0 14 14"><circle cx="5.7" cy="6" r="4.75" fill="none" stroke="#fff" stroke-width="1.5525"/><path d="M9.3 9.5L12.6 12.5" stroke="#fff" stroke-width="1.6675" stroke-linecap="round"/></svg>
</div>
<div class="btn" style="left:1559px;top:10px;width:27.2px;height:30px;background:#6ebfb8;">
<svg class="i" style="left:7.7px;top:7.7px" width="13" height="12" viewBox="0 0 13 12"><path d="M0.9 0.8L11.3 10.6M11.3 0.8L0.9 10.6" stroke="#fff" stroke-width="1.624" stroke-linecap="round" fill="none"/></svg>
</div>
<div class="inp dis" style="left:1604px;top:10px;width:146px;height:30px;">
<div class="clip" style="left:0px;top:0px;width:138.3px;height:28px;">
<span class="t" style="left:6.3px;top:7.5px;font-size:12px;line-height:15px;color:#7d8185;">LE</span>
</div>
</div>
</div>
<div class="tr" style="left:0px;top:270px;width:1619px;height:49px;">
<a class="t a" style="left:9px;top:17px;font-size:11px;line-height:14px;letter-spacing:-0.451px;">314534873</a>
<a class="t a" style="left:79.5px;top:10px;font-size:11px;line-height:14px;letter-spacing:-0.317px;word-spacing:0.317px;">2025 Concacaf Central</a>
<a class="t a" style="left:79.5px;top:24px;font-size:11px;line-height:14px;letter-spacing:-0.339px;word-spacing:0.339px;">American Cup - QF</a>
<div class="inp" style="left:217px;top:9px;width:146px;height:30px;">
<div class="clip" style="left:0px;top:0px;width:138.4px;height:28px;">
<span class="t" style="left:6.3px;top:7.5px;font-size:12px;line-height:15px;letter-spacing:-0.500px;word-spacing:0.500px;transform:scaleX(0.9180);">ESTADIO CEMENTOS PRO</span>
</div>
</div>
<div class="btn" style="left:365px;top:9px;width:28px;height:30px;">
<svg class="i" style="left:7.9px;top:7.6px" width="14" height="14" viewBox="0 0 14 14"><circle cx="5.7" cy="6" r="4.75" fill="none" stroke="#fff" stroke-width="1.35"/><path d="M9.3 9.5L12.6 12.5" stroke="#fff" stroke-width="1.45" stroke-linecap="round"/></svg>
</div>
<div class="btn" style="left:396px;top:9px;width:27.2px;height:30px;">
<svg class="i" style="left:7.5px;top:8.7px" width="13" height="12" viewBox="0 0 13 12"><path d="M0.9 0.8L11.3 10.6M11.3 0.8L0.9 10.6" stroke="#fff" stroke-width="1.45" stroke-linecap="round" fill="none"/></svg>
</div>
<div class="sel" style="left:441px;top:8px;width:83px;height:30px;">
<span class="t" style="left:6.3px;top:7.5px;font-size:12px;line-height:15px;letter-spacing:-0.500px;transform:scaleX(0.9837);">Choose</span>
<svg class="i" style="left:62.4px;top:11.95px" width="10.6" height="5.6" viewBox="0 0 10.6 5.6"><path d="M0.6 0.6L5.3 4.8L10 0.6" stroke="#555c63" stroke-width="1.2" stroke-linecap="round" stroke-linejoin="round" fill="none"/></svg>
</div>
<span class="t" style="left:542.3px;top:17px;font-size:11px;line-height:14px;">1</span>
<div class="inp" style="left:591px;top:9px;width:125.2px;height:30px;">
<div class="clip" style="left:0px;top:0px;width:117.5px;height:28px;">
<span class="t" style="left:6.3px;top:7.5px;font-size:12px;line-height:15px;letter-spacing:-0.478px;word-spacing:0.478px;">24.09.2025 20:06</span>
</div>
</div>
<div class="inp" style="left:733px;top:9px;width:27px;height:30px;">
</div>
<span class="t" style="left:762.7px;top:17px;font-size:11px;line-height:14px;font-weight:700;">:</span>
<div class="inp" style="left:768px;top:9px;width:27px;height:30px;">
</div>
<div class="inp" style="left:812px;top:9px;width:27px;height:30px;">
<div class="clip" style="left:0px;top:0px;width:20px;height:28px;">
<span class="t" style="left:6.3px;top:7.5px;font-size:12px;line-height:15px;letter-spacing:-0.500px;transform:scaleX(0.9709);">42</span>
</div>
</div>
<a class="t a" style="left:859.1px;top:10px;font-size:11px;line-height:14px;letter-spacing:-0.500px;word-spacing:0.500px;transform:scaleX(0.9601);">CLUB XELAJU M.C. -</a>
<a class="t a" style="left:859.1px;top:24px;font-size:11px;line-height:14px;letter-spacing:-0.500px;word-spacing:0.500px;transform:scaleX(0.9648);">SPORTING SAN MIGUELITO</a>
<div class="badge" style="left:1021px;top:14px;width:68px;height:20px;">
<span class="t" style="left:6.4px;top:4px;font-size:10px;line-height:13px;font-weight:700;color:#fff;letter-spacing:-0.500px;transform:scaleX(0.9388);-webkit-text-stroke:0.25px;">SCHEDULED</span>
</div>
<div class="inp dis" style="left:1109px;top:9px;width:145.3px;height:30px;">
<div class="clip" style="left:0px;top:0px;width:137.6px;height:28px;">
<span class="t" style="left:6.3px;top:7.5px;font-size:12px;line-height:15px;color:#7d8185;letter-spacing:-0.500px;word-spacing:0.500px;transform:scaleX(0.9472);">WALDIR GARCIA (SAN SAL</span>
</div>
</div>
<div class="dot" style="left:1257.2px;top:12px;width:21px;height:21px;">
</div>
<div class="btn" style="left:1281px;top:9px;width:27.2px;height:30px;background:#6ebfb8;">
<svg class="i" style="left:6.8px;top:7px" width="14" height="14" viewBox="0 0 14 14"><circle cx="5.7" cy="6" r="4.75" fill="none" stroke="#fff" stroke-width="1.5525"/><path d="M9.3 9.5L12.6 12.5" stroke="#fff" stroke-width="1.6675" stroke-linecap="round"/></svg>
</div>
<div class="btn" style="left:1311.2px;top:9px;width:27.8px;height:30px;background:#6ebfb8;">
<svg class="i" style="left:8.2px;top:7.7px" width="13" height="12" viewBox="0 0 13 12"><path d="M0.9 0.8L11.3 10.6M11.3 0.8L0.9 10.6" stroke="#fff" stroke-width="1.624" stroke-linecap="round" fill="none"/></svg>
</div>
<div class="inp dis" style="left:1356px;top:9px;width:146px;height:30px;">
<div class="clip" style="left:0px;top:0px;width:138.3px;height:28px;">
<span class="t" style="left:6.3px;top:7.5px;font-size:12px;line-height:15px;color:#7d8185;letter-spacing:-0.500px;word-spacing:0.500px;transform:scaleX(0.9723);">JOSE ANTONIO MANGAN</span>
</div>
</div>
<div class="dot" style="left:1504.8px;top:12px;width:21px;height:21px;">
</div>
<div class="btn" style="left:1528px;top:9px;width:28px;height:30px;background:#6ebfb8;">
<svg class="i" style="left:7.1px;top:7px" width="14" height="14" viewBox="0 0 14 14"><circle cx="5.7" cy="6" r="4.75" fill="none" stroke="#fff" stroke-width="1.5525"/><path d="M9.3 9.5L12.6 12.5" stroke="#fff" stroke-width="1.6675" stroke-linecap="round"/></svg>
</div>
<div class="btn" style="left:1559px;top:9px;width:27.2px;height:30px;background:#6ebfb8;">
<svg class="i" style="left:7.7px;top:7.7px" width="13" height="12" viewBox="0 0 13 12"><path d="M0.9 0.8L11.3 10.6M11.3 0.8L0.9 10.6" stroke="#fff" stroke-width="1.624" stroke-linecap="round" fill="none"/></svg>
</div>
<div class="inp dis" style="left:1604px;top:9px;width:146px;height:30px;">
<div class="clip" style="left:0px;top:0px;width:138.3px;height:28px;">
<span class="t" style="left:6.3px;top:7.5px;font-size:12px;line-height:15px;color:#7d8185;">CA</span>
</div>
</div>
</div>
<div class="tr" style="left:0px;top:320px;width:1619px;height:49px;">
<a class="t a" style="left:9px;top:17px;font-size:11px;line-height:14px;letter-spacing:-0.396px;">314534874</a>
<a class="t a" style="left:79.5px;top:10px;font-size:11px;line-height:14px;letter-spacing:-0.317px;word-spacing:0.317px;">2025 Concacaf Central</a>
<a class="t a" style="left:79.5px;top:24px;font-size:11px;line-height:14px;letter-spacing:-0.339px;word-spacing:0.339px;">American Cup - QF</a>
<div class="inp" style="left:217px;top:10px;width:146px;height:29px;">
<div class="clip" style="left:0px;top:0px;width:138.4px;height:27px;">
<span class="t" style="left:6.3px;top:6.5px;font-size:12px;line-height:15px;letter-spacing:-0.500px;word-spacing:0.500px;transform:scaleX(0.9408);">ESTADIO FRANCISCO MO</span>
</div>
</div>
<div class="btn" style="left:365px;top:10px;width:28px;height:29px;">
<svg class="i" style="left:7.9px;top:7.1px" width="14" height="14" viewBox="0 0 14 14"><circle cx="5.7" cy="6" r="4.75" fill="none" stroke="#fff" stroke-width="1.35"/><path d="M9.3 9.5L12.6 12.5" stroke="#fff" stroke-width="1.45" stroke-linecap="round"/></svg>
</div>
<div class="btn" style="left:396px;top:10px;width:27.2px;height:29px;">
<svg class="i" style="left:7.5px;top:8.2px" width="13" height="12" viewBox="0 0 13 12"><path d="M0.9 0.8L11.3 10.6M11.3 0.8L0.9 10.6" stroke="#fff" stroke-width="1.45" stroke-linecap="round" fill="none"/></svg>
</div>
<div class="sel" style="left:441px;top:9px;width:83px;height:29px;">
<span class="t" style="left:6.3px;top:6.5px;font-size:12px;line-height:15px;letter-spacing:-0.500px;transform:scaleX(0.9837);">Choose</span>
<svg class="i" style="left:62.4px;top:11.45px" width="10.6" height="5.6" viewBox="0 0 10.6 5.6"><path d="M0.6 0.6L5.3 4.8L10 0.6" stroke="#555c63" stroke-width="1.2" stroke-linecap="round" stroke-linejoin="round" fill="none"/></svg>
</div>
<span class="t" style="left:542.3px;top:17px;font-size:11px;line-height:14px;">1</span>
<div class="inp" style="left:591px;top:10px;width:125.2px;height:29px;">
<div class="clip" style="left:0px;top:0px;width:117.5px;height:27px;">
<span class="t" style="left:6.3px;top:6.5px;font-size:12px;line-height:15px;letter-spacing:-0.478px;word-spacing:0.478px;">24.09.2025 20:06</span>
</div>
</div>
<div class="inp" style="left:733px;top:10px;width:27px;height:29px;">
</div>
<span class="t" style="left:762.7px;top:17px;font-size:11px;line-height:14px;font-weight:700;">:</span>
<div class="inp" style="left:768px;top:10px;width:27px;height:29px;">
</div>
<div class="inp" style="left:812px;top:10px;width:27px;height:29px;">
<div class="clip" style="left:0px;top:0px;width:20px;height:27px;">
<span class="t" style="left:6.3px;top:6.5px;font-size:12px;line-height:15px;letter-spacing:-0.500px;transform:scaleX(0.9709);">43</span>
</div>
</div>
<a class="t a" style="left:859.1px;top:10px;font-size:11px;line-height:14px;letter-spacing:-0.500px;word-spacing:0.500px;transform:scaleX(0.9639);">REAL ESPAÑA - CD PLAZA</a>
<a class="t a" style="left:859.1px;top:24px;font-size:11px;line-height:14px;letter-spacing:-0.422px;">AMADOR</a>
<div class="badge" style="left:1021px;top:14px;width:68px;height:21px;">
<span class="t" style="left:6.4px;top:4px;font-size:10px;line-height:13px;font-weight:700;color:#fff;letter-spacing:-0.500px;transform:scaleX(0.9388);-webkit-text-stroke:0.25px;">SCHEDULED</span>
</div>
<div class="inp dis" style="left:1109px;top:10px;width:145.3px;height:29px;">
<div class="clip" style="left:0px;top:0px;width:137.6px;height:27px;">
<span class="t" style="left:6.3px;top:6.5px;font-size:12px;line-height:15px;color:#7d8185;letter-spacing:-0.500px;word-spacing:0.500px;transform:scaleX(0.9389);">STEVEN MADRIGAL  (San J</span>
</div>
</div>
<div class="dot" style="left:1257.2px;top:12px;width:21px;height:21px;">
</div>
<div class="btn" style="left:1281px;top:10px;width:27.2px;height:29px;background:#6ebfb8;">
<svg class="i" style="left:6.8px;top:6.5px" width="14" height="14" viewBox="0 0 14 14"><circle cx="5.7" cy="6" r="4.75" fill="none" stroke="#fff" stroke-width="1.5525"/><path d="M9.3 9.5L12.6 12.5" stroke="#fff" stroke-width="1.6675" stroke-linecap="round"/></svg>
</div>
<div class="btn" style="left:1311.2px;top:10px;width:27.8px;height:29px;background:#6ebfb8;">
<svg class="i" style="left:8.2px;top:7.2px" width="13" height="12" viewBox="0 0 13 12"><path d="M0.9 0.8L11.3 10.6M11.3 0.8L0.9 10.6" stroke="#fff" stroke-width="1.624" stroke-linecap="round" fill="none"/></svg>
</div>
<div class="inp dis" style="left:1356px;top:10px;width:146px;height:29px;">
<div class="clip" style="left:0px;top:0px;width:138.3px;height:27px;">
<span class="t" style="left:6.3px;top:6.5px;font-size:12px;line-height:15px;color:#7d8185;letter-spacing:-0.500px;word-spacing:0.500px;transform:scaleX(0.8879);">JERIEL VALVERDE</span>
</div>
</div>
<div class="dot" style="left:1504.8px;top:12px;width:21px;height:21px;">
</div>
<div class="btn" style="left:1528px;top:10px;width:28px;height:29px;background:#6ebfb8;">
<svg class="i" style="left:7.1px;top:6.5px" width="14" height="14" viewBox="0 0 14 14"><circle cx="5.7" cy="6" r="4.75" fill="none" stroke="#fff" stroke-width="1.5525"/><path d="M9.3 9.5L12.6 12.5" stroke="#fff" stroke-width="1.6675" stroke-linecap="round"/></svg>
</div>
<div class="btn" style="left:1559px;top:10px;width:27.2px;height:29px;background:#6ebfb8;">
<svg class="i" style="left:7.7px;top:7.2px" width="13" height="12" viewBox="0 0 13 12"><path d="M0.9 0.8L11.3 10.6M11.3 0.8L0.9 10.6" stroke="#fff" stroke-width="1.624" stroke-linecap="round" fill="none"/></svg>
</div>
<div class="inp dis" style="left:1604px;top:10px;width:146px;height:29px;">
<div class="clip" style="left:0px;top:0px;width:138.3px;height:27px;">
<span class="t" style="left:6.3px;top:6.5px;font-size:12px;line-height:15px;color:#7d8185;">LU</span>
</div>
</div>
</div>
<div class="tr" style="left:0px;top:370px;width:1619px;height:49px;">
<a class="t a" style="left:9px;top:18px;font-size:11px;line-height:14px;letter-spacing:-0.451px;">314534875</a>
<a class="t a" style="left:79.5px;top:11px;font-size:11px;line-height:14px;letter-spacing:-0.317px;word-spacing:0.317px;">2025 Concacaf Central</a>
<a class="t a" style="left:79.5px;top:25px;font-size:11px;line-height:14px;letter-spacing:-0.339px;word-spacing:0.339px;">American Cup - QF</a>
<div class="inp" style="left:217px;top:10px;width:146px;height:29px;">
<div class="clip" style="left:0px;top:0px;width:138.4px;height:27px;">
<span class="t" style="left:6.3px;top:6.5px;font-size:12px;line-height:15px;letter-spacing:-0.500px;word-spacing:0.500px;transform:scaleX(0.9194);">ESTADIO FELLO MEZA</span>
</div>
</div>
<div class="btn" style="left:365px;top:10px;width:28px;height:29px;">
<svg class="i" style="left:7.9px;top:7.1px" width="14" height="14" viewBox="0 0 14 14"><circle cx="5.7" cy="6" r="4.75" fill="none" stroke="#fff" stroke-width="1.35"/><path d="M9.3 9.5L12.6 12.5" stroke="#fff" stroke-width="1.45" stroke-linecap="round"/></svg>
</div>
<div class="btn" style="left:396px;top:10px;width:27.2px;height:29px;">
<svg class="i" style="left:7.5px;top:8.2px" width="13" height="12" viewBox="0 0 13 12"><path d="M0.9 0.8L11.3 10.6M11.3 0.8L0.9 10.6" stroke="#fff" stroke-width="1.45" stroke-linecap="round" fill="none"/></svg>
</div>
<div class="sel" style="left:441px;top:9px;width:83px;height:29px;">
<span class="t" style="left:6.3px;top:6.5px;font-size:12px;line-height:15px;letter-spacing:-0.500px;transform:scaleX(0.9837);">Choose</span>
<svg class="i" style="left:62.4px;top:11.45px" width="10.6" height="5.6" viewBox="0 0 10.6 5.6"><path d="M0.6 0.6L5.3 4.8L10 0.6" stroke="#555c63" stroke-width="1.2" stroke-linecap="round" stroke-linejoin="round" fill="none"/></svg>
</div>
<span class="t" style="left:542.3px;top:18px;font-size:11px;line-height:14px;">1</span>
<div class="inp" style="left:591px;top:10px;width:125.2px;height:29px;">
<div class="clip" style="left:0px;top:0px;width:117.5px;height:27px;">
<span class="t" style="left:6.3px;top:6.5px;font-size:12px;line-height:15px;letter-spacing:-0.478px;word-spacing:0.478px;">25.09.2025 20:06</span>
</div>
</div>
<div class="inp" style="left:733px;top:10px;width:27px;height:29px;">
</div>
<span class="t" style="left:762.7px;top:18px;font-size:11px;line-height:14px;font-weight:700;">:</span>
<div class="inp" style="left:768px;top:10px;width:27px;height:29px;">
</div>
<div class="inp" style="left:812px;top:10px;width:27px;height:29px;">
<div class="clip" style="left:0px;top:0px;width:20px;height:27px;">
<span class="t" style="left:6.3px;top:6.5px;font-size:12px;line-height:15px;letter-spacing:-0.500px;transform:scaleX(0.9709);">44</span>
</div>
</div>
<a class="t a" style="left:859.1px;top:11px;font-size:11px;line-height:14px;letter-spacing:-0.500px;word-spacing:0.500px;transform:scaleX(0.9393);">CS CARTAGINES - CD</a>
<a class="t a" style="left:859.1px;top:25px;font-size:11px;line-height:14px;letter-spacing:-0.411px;">OLIMPIA</a>
<div class="badge" style="left:1021px;top:14px;width:68px;height:21px;">
<span class="t" style="left:6.4px;top:4px;font-size:10px;line-height:13px;font-weight:700;color:#fff;letter-spacing:-0.500px;transform:scaleX(0.9388);-webkit-text-stroke:0.25px;">SCHEDULED</span>
</div>
<div class="inp dis" style="left:1109px;top:10px;width:145.3px;height:29px;">
<div class="clip" style="left:0px;top:0px;width:137.6px;height:27px;">
<span class="t" style="left:6.3px;top:6.5px;font-size:12px;line-height:15px;color:#7d8185;letter-spacing:-0.500px;word-spacing:0.500px;transform:scaleX(0.9623);">FERNANDO MORON (Pan</span>
</div>
</div>
<div class="dot" style="left:1257.2px;top:12px;width:21px;height:21px;">
</div>
<div class="btn" style="left:1281px;top:10px;width:27.2px;height:29px;background:#6ebfb8;">
<svg class="i" style="left:6.8px;top:6.5px" width="14" height="14" viewBox="0 0 14 14"><circle cx="5.7" cy="6" r="4.75" fill="none" stroke="#fff" stroke-width="1.5525"/><path d="M9.3 9.5L12.6 12.5" stroke="#fff" stroke-width="1.6675" stroke-linecap="round"/></svg>
</div>
<div class="btn" style="left:1311.2px;top:10px;width:27.8px;height:29px;background:#6ebfb8;">
<svg class="i" style="left:8.2px;top:7.2px" width="13" height="12" viewBox="0 0 13 12"><path d="M0.9 0.8L11.3 10.6M11.3 0.8L0.9 10.6" stroke="#fff" stroke-width="1.624" stroke-linecap="round" fill="none"/></svg>
</div>
<div class="inp dis" style="left:1356px;top:10px;width:146px;height:29px;">
<div class="clip" style="left:0px;top:0px;width:138.3px;height:27px;">
<span class="t" style="left:6.3px;top:6.5px;font-size:12px;line-height:15px;color:#7d8185;letter-spacing:-0.500px;word-spacing:0.500px;transform:scaleX(0.9453);">ALEJANDRO CAMARENA</span>
</div>
</div>
<div class="dot" style="left:1504.8px;top:12px;width:21px;height:21px;">
</div>
<div class="btn" style="left:1528px;top:10px;width:28px;height:29px;background:#6ebfb8;">
<svg class="i" style="left:7.1px;top:6.5px" width="14" height="14" viewBox="0 0 14 14"><circle cx="5.7" cy="6" r="4.75" fill="none" stroke="#fff" stroke-width="1.5525"/><path d="M9.3 9.5L12.6 12.5" stroke="#fff" stroke-width="1.6675" stroke-linecap="round"/></svg>
</div>
<div class="btn" style="left:1559px;top:10px;width:27.2px;height:29px;background:#6ebfb8;">
<svg class="i" style="left:7.7px;top:7.2px" width="13" height="12" viewBox="0 0 13 12"><path d="M0.9 0.8L11.3 10.6M11.3 0.8L0.9 10.6" stroke="#fff" stroke-width="1.624" stroke-linecap="round" fill="none"/></svg>
</div>
<div class="inp dis" style="left:1604px;top:10px;width:146px;height:29px;">
<div class="clip" style="left:0px;top:0px;width:138.3px;height:27px;">
<span class="t" style="left:6.3px;top:6.5px;font-size:12px;line-height:15px;color:#7d8185;">AN</span>
</div>
</div>
</div>
<div class="tr" style="left:0px;top:420px;width:1619px;height:49px;">
<a class="t a" style="left:9px;top:18px;font-size:11px;line-height:14px;letter-spacing:-0.451px;">319226249</a>
<a class="t a" style="left:79.5px;top:11px;font-size:11px;line-height:14px;letter-spacing:-0.372px;word-spacing:0.372px;">Concacaf Summer Cup</a>
<a class="t a" style="left:79.5px;top:25px;font-size:11px;line-height:14px;letter-spacing:-0.246px;">2026</a>
<div class="inp" style="left:217px;top:10px;width:146px;height:29px;">
<div class="clip" style="left:0px;top:0px;width:138.4px;height:27px;">
<span class="t" style="left:6.3px;top:6.5px;font-size:12px;line-height:15px;letter-spacing:-0.500px;word-spacing:0.500px;transform:scaleX(0.9392);">BMO FIELD</span>
</div>
</div>
<div class="btn" style="left:365px;top:10px;width:28px;height:29px;">
<svg class="i" style="left:7.9px;top:7.1px" width="14" height="14" viewBox="0 0 14 14"><circle cx="5.7" cy="6" r="4.75" fill="none" stroke="#fff" stroke-width="1.35"/><path d="M9.3 9.5L12.6 12.5" stroke="#fff" stroke-width="1.45" stroke-linecap="round"/></svg>
</div>
<div class="btn" style="left:396px;top:10px;width:27.2px;height:29px;">
<svg class="i" style="left:7.5px;top:8.2px" width="13" height="12" viewBox="0 0 13 12"><path d="M0.9 0.8L11.3 10.6M11.3 0.8L0.9 10.6" stroke="#fff" stroke-width="1.45" stroke-linecap="round" fill="none"/></svg>
</div>
<div class="sel" style="left:441px;top:9px;width:83px;height:29px;">
<span class="t" style="left:6.3px;top:6.5px;font-size:12px;line-height:15px;letter-spacing:-0.500px;transform:scaleX(0.9837);">Choose</span>
<svg class="i" style="left:62.4px;top:11.45px" width="10.6" height="5.6" viewBox="0 0 10.6 5.6"><path d="M0.6 0.6L5.3 4.8L10 0.6" stroke="#555c63" stroke-width="1.2" stroke-linecap="round" stroke-linejoin="round" fill="none"/></svg>
</div>
<span class="t" style="left:542.3px;top:18px;font-size:11px;line-height:14px;">2</span>
<div class="inp" style="left:591px;top:10px;width:125.2px;height:29px;">
<div class="clip" style="left:0px;top:0px;width:117.5px;height:27px;">
<span class="t" style="left:6.3px;top:6.5px;font-size:12px;line-height:15px;letter-spacing:-0.478px;word-spacing:0.478px;">25.09.2025 21:00</span>
</div>
</div>
<div class="inp" style="left:733px;top:10px;width:27px;height:29px;">
<div class="clip" style="left:0px;top:0px;width:20px;height:27px;">
<span class="t" style="left:6.3px;top:6.5px;font-size:12px;line-height:15px;">3</span>
</div>
</div>
<span class="t" style="left:762.7px;top:18px;font-size:11px;line-height:14px;font-weight:700;">:</span>
<div class="inp" style="left:768px;top:10px;width:27px;height:29px;">
<div class="clip" style="left:0px;top:0px;width:20px;height:27px;">
<span class="t" style="left:6.3px;top:6.5px;font-size:12px;line-height:15px;">4</span>
</div>
</div>
<div class="inp" style="left:812px;top:10px;width:27px;height:29px;">
<div class="clip" style="left:0px;top:0px;width:20px;height:27px;">
<span class="t" style="left:6.3px;top:6.5px;font-size:12px;line-height:15px;">4</span>
</div>
</div>
<a class="t a" style="left:859.1px;top:11px;font-size:11px;line-height:14px;letter-spacing:-0.500px;word-spacing:0.500px;transform:scaleX(0.9384);">TORONTO FC - CS</a>
<a class="t a" style="left:859.1px;top:25px;font-size:11px;line-height:14px;letter-spacing:-0.500px;transform:scaleX(0.9646);">HEREDIANO</a>
<div class="badge" style="left:1021px;top:15px;width:68px;height:20px;">
<span class="t" style="left:6.4px;top:4px;font-size:10px;line-height:13px;font-weight:700;color:#fff;letter-spacing:-0.500px;transform:scaleX(0.9388);-webkit-text-stroke:0.25px;">SCHEDULED</span>
</div>
<div class="inp dis" style="left:1109px;top:10px;width:145.3px;height:29px;">
<div class="clip" style="left:0px;top:0px;width:137.6px;height:27px;">
<span class="t" style="left:6.3px;top:6.5px;font-size:12px;line-height:15px;color:#7d8185;letter-spacing:-0.500px;word-spacing:0.500px;transform:scaleX(0.9306);">THEO MACIAS (JESUS MA</span>
</div>
</div>
<div class="dot" style="left:1257.2px;top:12px;width:21px;height:21px;">
</div>
<div class="btn" style="left:1281px;top:10px;width:27.2px;height:29px;background:#6ebfb8;">
<svg class="i" style="left:6.8px;top:6.5px" width="14" height="14" viewBox="0 0 14 14"><circle cx="5.7" cy="6" r="4.75" fill="none" stroke="#fff" stroke-width="1.5525"/><path d="M9.3 9.5L12.6 12.5" stroke="#fff" stroke-width="1.6675" stroke-linecap="round"/></svg>
</div>
<div class="btn" style="left:1311.2px;top:10px;width:27.8px;height:29px;background:#6ebfb8;">
<svg class="i" style="left:8.2px;top:7.2px" width="13" height="12" viewBox="0 0 13 12"><path d="M0.9 0.8L11.3 10.6M11.3 0.8L0.9 10.6" stroke="#fff" stroke-width="1.624" stroke-linecap="round" fill="none"/></svg>
</div>
<div class="inp dis" style="left:1356px;top:10px;width:146px;height:29px;">
<div class="clip" style="left:0px;top:0px;width:138.3px;height:27px;">
<span class="t" style="left:6.3px;top:6.5px;font-size:12px;line-height:15px;color:#7d8185;letter-spacing:-0.500px;word-spacing:0.500px;transform:scaleX(0.9349);">IVAN MARCUS CALDERON</span>
</div>
</div>
<div class="dot" style="left:1504.8px;top:12px;width:21px;height:21px;">
</div>
<div class="btn" style="left:1528px;top:10px;width:28px;height:29px;background:#6ebfb8;">
<svg class="i" style="left:7.1px;top:6.5px" width="14" height="14" viewBox="0 0 14 14"><circle cx="5.7" cy="6" r="4.75" fill="none" stroke="#fff" stroke-width="1.5525"/><path d="M9.3 9.5L12.6 12.5" stroke="#fff" stroke-width="1.6675" stroke-linecap="round"/></svg>
</div>
<div class="btn" style="left:1559px;top:10px;width:27.2px;height:29px;background:#6ebfb8;">
<svg class="i" style="left:7.7px;top:7.2px" width="13" height="12" viewBox="0 0 13 12"><path d="M0.9 0.8L11.3 10.6M11.3 0.8L0.9 10.6" stroke="#fff" stroke-width="1.624" stroke-linecap="round" fill="none"/></svg>
</div>
<div class="inp dis" style="left:1604px;top:10px;width:146px;height:29px;">
<div class="clip" style="left:0px;top:0px;width:138.3px;height:27px;">
<span class="t" style="left:6.3px;top:6.5px;font-size:12px;line-height:15px;color:#7d8185;">MA</span>
</div>
</div>
</div>
<div class="tr" style="left:0px;top:470px;width:1619px;height:49px;">
<a class="t a" style="left:9px;top:18px;font-size:11px;line-height:14px;letter-spacing:-0.451px;">319227058</a>
<a class="t a" style="left:79.5px;top:11px;font-size:11px;line-height:14px;letter-spacing:-0.372px;word-spacing:0.372px;">Concacaf Summer Cup</a>
<a class="t a" style="left:79.5px;top:25px;font-size:11px;line-height:14px;letter-spacing:-0.246px;">2026</a>
<div class="inp" style="left:217px;top:10px;width:146px;height:30px;">
<div class="clip" style="left:0px;top:0px;width:138.4px;height:28px;">
<span class="t" style="left:6.3px;top:7.5px;font-size:12px;line-height:15px;letter-spacing:-0.500px;word-spacing:0.500px;transform:scaleX(0.9208);">ESTADIO CIBAO FC</span>
</div>
</div>
<div class="btn" style="left:365px;top:10px;width:28px;height:30px;">
<svg class="i" style="left:7.9px;top:7.6px" width="14" height="14" viewBox="0 0 14 14"><circle cx="5.7" cy="6" r="4.75" fill="none" stroke="#fff" stroke-width="1.35"/><path d="M9.3 9.5L12.6 12.5" stroke="#fff" stroke-width="1.45" stroke-linecap="round"/></svg>
</div>
<div class="btn" style="left:396px;top:10px;width:27.2px;height:30px;">
<svg class="i" style="left:7.5px;top:8.7px" width="13" height="12" viewBox="0 0 13 12"><path d="M0.9 0.8L11.3 10.6M11.3 0.8L0.9 10.6" stroke="#fff" stroke-width="1.45" stroke-linecap="round" fill="none"/></svg>
</div>
<div class="sel" style="left:441px;top:9px;width:83px;height:30px;">
<span class="t" style="left:6.3px;top:7.5px;font-size:12px;line-height:15px;letter-spacing:-0.500px;transform:scaleX(0.9837);">Choose</span>
<svg class="i" style="left:62.4px;top:11.95px" width="10.6" height="5.6" viewBox="0 0 10.6 5.6"><path d="M0.6 0.6L5.3 4.8L10 0.6" stroke="#555c63" stroke-width="1.2" stroke-linecap="round" stroke-linejoin="round" fill="none"/></svg>
</div>
<span class="t" style="left:542.3px;top:18px;font-size:11px;line-height:14px;">3</span>
<div class="inp" style="left:591px;top:10px;width:125.2px;height:30px;">
<div class="clip" style="left:0px;top:0px;width:117.5px;height:28px;">
<span class="t" style="left:6.3px;top:7.5px;font-size:12px;line-height:15px;letter-spacing:-0.478px;word-spacing:0.478px;">25.09.2025 20:00</span>
</div>
</div>
<div class="inp" style="left:733px;top:10px;width:27px;height:30px;">
<div class="clip" style="left:0px;top:0px;width:20px;height:28px;">
<span class="t" style="left:6.3px;top:7.5px;font-size:12px;line-height:15px;">0</span>
</div>
</div>
<span class="t" style="left:762.7px;top:18px;font-size:11px;line-height:14px;font-weight:700;">:</span>
<div class="inp" style="left:768px;top:10px;width:27px;height:30px;">
<div class="clip" style="left:0px;top:0px;width:20px;height:28px;">
<span class="t" style="left:6.3px;top:7.5px;font-size:12px;line-height:15px;">1</span>
</div>
</div>
<div class="inp" style="left:812px;top:10px;width:27px;height:30px;">
<div class="clip" style="left:0px;top:0px;width:20px;height:28px;">
<span class="t" style="left:6.3px;top:7.5px;font-size:12px;line-height:15px;">7</span>
</div>
</div>
<a class="t a" style="left:859.1px;top:11px;font-size:11px;line-height:14px;letter-spacing:-0.500px;word-spacing:0.500px;transform:scaleX(0.9608);">CS HEREDIANO - TORONTO</a>
<a class="t a" style="left:859.1px;top:25px;font-size:11px;line-height:14px;letter-spacing:-0.500px;transform:scaleX(0.8411);">FC</a>
<div class="badge" style="left:1021px;top:15px;width:68px;height:20px;">
<span class="t" style="left:6.4px;top:4px;font-size:10px;line-height:13px;font-weight:700;color:#fff;letter-spacing:-0.500px;transform:scaleX(0.9388);-webkit-text-stroke:0.25px;">SCHEDULED</span>
</div>
<div class="inp dis" style="left:1109px;top:10px;width:145.3px;height:30px;">
<div class="clip" style="left:0px;top:0px;width:137.6px;height:28px;">
<span class="t" style="left:6.3px;top:7.5px;font-size:12px;line-height:15px;color:#7d8185;letter-spacing:-0.500px;word-spacing:0.500px;transform:scaleX(0.9306);">THEO MACIAS (JESUS MA</span>
</div>
</div>
<div class="dot" style="left:1257.2px;top:12px;width:21px;height:21px;">
</div>
<div class="btn" style="left:1281px;top:10px;width:27.2px;height:30px;background:#6ebfb8;">
<svg class="i" style="left:6.8px;top:7px" width="14" height="14" viewBox="0 0 14 14"><circle cx="5.7" cy="6" r="4.75" fill="none" stroke="#fff" stroke-width="1.5525"/><path d="M9.3 9.5L12.6 12.5" stroke="#fff" stroke-width="1.6675" stroke-linecap="round"/></svg>
</div>
<div class="btn" style="left:1311.2px;top:10px;width:27.8px;height:30px;background:#6ebfb8;">
<svg class="i" style="left:8.2px;top:7.7px" width="13" height="12" viewBox="0 0 13 12"><path d="M0.9 0.8L11.3 10.6M11.3 0.8L0.9 10.6" stroke="#fff" stroke-width="1.624" stroke-linecap="round" fill="none"/></svg>
</div>
<div class="inp dis" style="left:1356px;top:10px;width:146px;height:30px;">
<div class="clip" style="left:0px;top:0px;width:138.3px;height:28px;">
<span class="t" style="left:6.3px;top:7.5px;font-size:12px;line-height:15px;color:#7d8185;letter-spacing:-0.500px;word-spacing:0.500px;transform:scaleX(0.9349);">IVAN MARCUS CALDERON</span>
</div>
</div>
<div class="dot" style="left:1504.8px;top:12px;width:21px;height:21px;">
</div>
<div class="btn" style="left:1528px;top:10px;width:28px;height:30px;background:#6ebfb8;">
<svg class="i" style="left:7.1px;top:7px" width="14" height="14" viewBox="0 0 14 14"><circle cx="5.7" cy="6" r="4.75" fill="none" stroke="#fff" stroke-width="1.5525"/><path d="M9.3 9.5L12.6 12.5" stroke="#fff" stroke-width="1.6675" stroke-linecap="round"/></svg>
</div>
<div class="btn" style="left:1559px;top:10px;width:27.2px;height:30px;background:#6ebfb8;">
<svg class="i" style="left:7.7px;top:7.7px" width="13" height="12" viewBox="0 0 13 12"><path d="M0.9 0.8L11.3 10.6M11.3 0.8L0.9 10.6" stroke="#fff" stroke-width="1.624" stroke-linecap="round" fill="none"/></svg>
</div>
<div class="inp dis" style="left:1604px;top:10px;width:146px;height:30px;">
<div class="clip" style="left:0px;top:0px;width:138.3px;height:28px;">
<span class="t" style="left:6.3px;top:7.5px;font-size:12px;line-height:15px;color:#7d8185;">MA</span>
</div>
</div>
</div>
<div class="hscroll" style="left:0px;top:520px;width:1619px;height:20px;">
<div class="arrl"></div><div class="thumb"></div><div class="arrr"></div>
</div>
</div>
<span class="t" style="left:1267.25px;top:624px;font-size:11px;line-height:14px;color:#6c757d;letter-spacing:-0.361px;word-spacing:0.361px;">Items per page:</span>
<div class="sel" style="left:1345px;top:617px;width:42px;height:28px;">
<span class="t" style="left:5.8px;top:6px;font-size:11px;line-height:14px;letter-spacing:-0.500px;transform:scaleX(0.9956);">10</span>
<svg class="i" style="left:22.5px;top:9.85px" width="10.6" height="5.6" viewBox="0 0 10.6 5.6"><path d="M0.6 0.6L5.3 4.8L10 0.6" stroke="#555c63" stroke-width="1.2" stroke-linecap="round" stroke-linejoin="round" fill="none"/></svg>
</div>
<span class="t" style="left:1404.25px;top:624px;font-size:11px;line-height:14px;color:#6c757d;letter-spacing:-0.356px;word-spacing:0.356px;">1 - 9 of 9 results</span>
<svg class="i" style="left:1499.1px;top:627.7px" width="8.2" height="5.8" viewBox="0 0 8.2 5.8"><path d="M3.6 0.7L0.8 2.9L3.6 5.1M7.4 0.7L4.6 2.9L7.4 5.1" stroke="#9ea3a9" stroke-width="1.35" fill="none" stroke-linecap="round" stroke-linejoin="round"/></svg>
<svg class="i" style="left:1527.1px;top:626.8px" width="5.2" height="7.4" viewBox="0 0 5.2 7.4"><path d="M4.4 0.8L1 3.7L4.4 6.6" stroke="#9ea3a9" stroke-width="1.35" fill="none" stroke-linecap="round" stroke-linejoin="round"/></svg>
<div class="page" style="left:1545.2px;top:619px;width:23.8px;height:23.8px;">
<span class="t" style="left:9.1px;top:6px;font-size:11px;line-height:14px;color:#fff;">1</span>
</div>
<svg class="i" style="left:1582px;top:626.8px" width="5.2" height="7.4" viewBox="0 0 5.2 7.4"><path d="M0.8 0.8L4.2 3.7L0.8 6.6" stroke="#9ea3a9" stroke-width="1.35" fill="none" stroke-linecap="round" stroke-linejoin="round"/></svg>
<svg class="i" style="left:1607.2px;top:627.7px" width="8.2" height="5.8" viewBox="0 0 8.2 5.8"><path d="M0.8 0.7L3.6 2.9L0.8 5.1M4.6 0.7L7.4 2.9L4.6 5.1" stroke="#9ea3a9" stroke-width="1.35" fill="none" stroke-linecap="round" stroke-linejoin="round"/></svg>
</div>
</body></html>
